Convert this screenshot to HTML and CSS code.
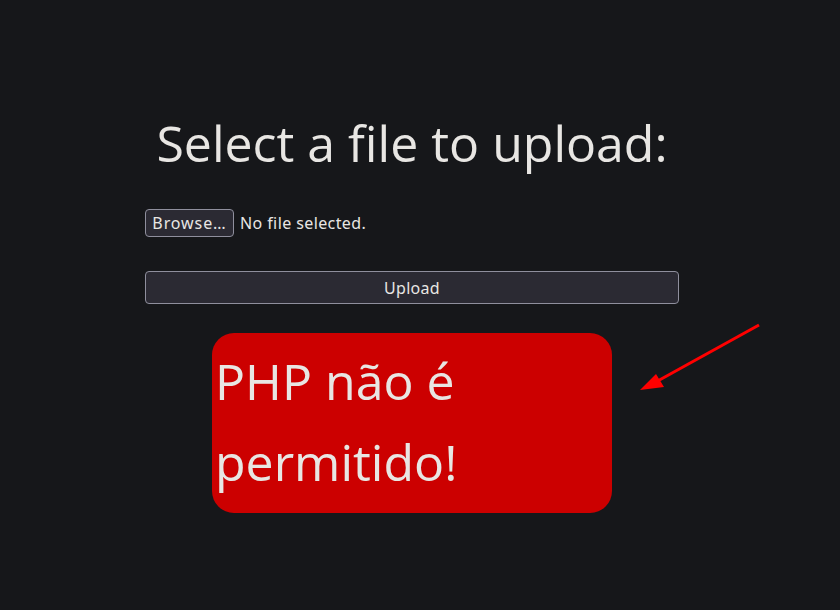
FILE: index.html
```html
<!DOCTYPE html>
<html>
  <head>
    <meta charset="utf-8">
    <title>Upload</title>
    <link rel="stylesheet" href="styles.css">
  </head>
  <body>
    <div class="page">
      <form class="upload" method="post" action="upload.php" enctype="multipart/form-data">
        <h1 class="title">Select a file to upload:</h1>
        <div class="picker">
          <label class="browse" for="file">Browse…</label>
          <span class="picked">No file selected.</span>
          <input class="hidden" type="file" id="file" name="file">
        </div>
        <button class="send" type="submit">Upload</button>
      </form>

      <div class="notice">PHP não é permitido!</div>

      <svg class="arrow" width="130" height="80" viewBox="0 0 130 80">
        <line x1="127" y1="5" x2="22" y2="63" stroke="#ff0000" stroke-width="3"/>
        <polygon points="8,70 24,54 32,67" fill="#ff0000"/>
      </svg>
    </div>
  </body>
</html>
```

FILE: styles.css
```css
html, body{
  margin: 0;
  background: #16171a;
}
body{
  color: #e8e6e3;
  font-family: "Open Sans", "Noto Sans", sans-serif;
}
.page{
  position: relative;
  width: 840px;
  height: 610px;
  padding-top: 108px;
  box-sizing: border-box;
}
.upload{
  width: 534px;
  margin-left: 145px;
}
.title{
  margin: 0;
  text-align: center;
  font-weight: 400;
  font-size: 50px;
  line-height: 70px;
}
.picker{
  display: flex;
  align-items: center;
  gap: 6px;
  margin-top: 31px;
  font-family: "Noto Sans", sans-serif;
  font-size: 16px;
  letter-spacing: 0.4px;
}
.browse{
  display: inline-block;
  width: 89px;
  height: 28px;
  line-height: 26px;
  text-align: center;
  box-sizing: border-box;
  border: 1px solid #8f8f9d;
  border-radius: 4px;
  background: #2b2a33;
  letter-spacing: 0.9px;
  cursor: pointer;
}
.hidden{
  display: none;
}
.send{
  display: block;
  width: 100%;
  height: 33px;
  margin-top: 34px;
  border: 1px solid #8f8f9d;
  border-radius: 4px;
  background: #2b2a33;
  color: #e8e6e3;
  font-family: "Noto Sans", sans-serif;
  font-size: 16px;
  letter-spacing: 0.3px;
}
.notice{
  width: 400px;
  height: 180px;
  margin: 29px 0 0 212px;
  padding: 8px 0 0 3px;
  box-sizing: border-box;
  border-radius: 22px;
  background: #cc0000;
  font-size: 50px;
  line-height: 81px;
}
.arrow{
  position: absolute;
  left: 632px;
  top: 320px;
}
```
